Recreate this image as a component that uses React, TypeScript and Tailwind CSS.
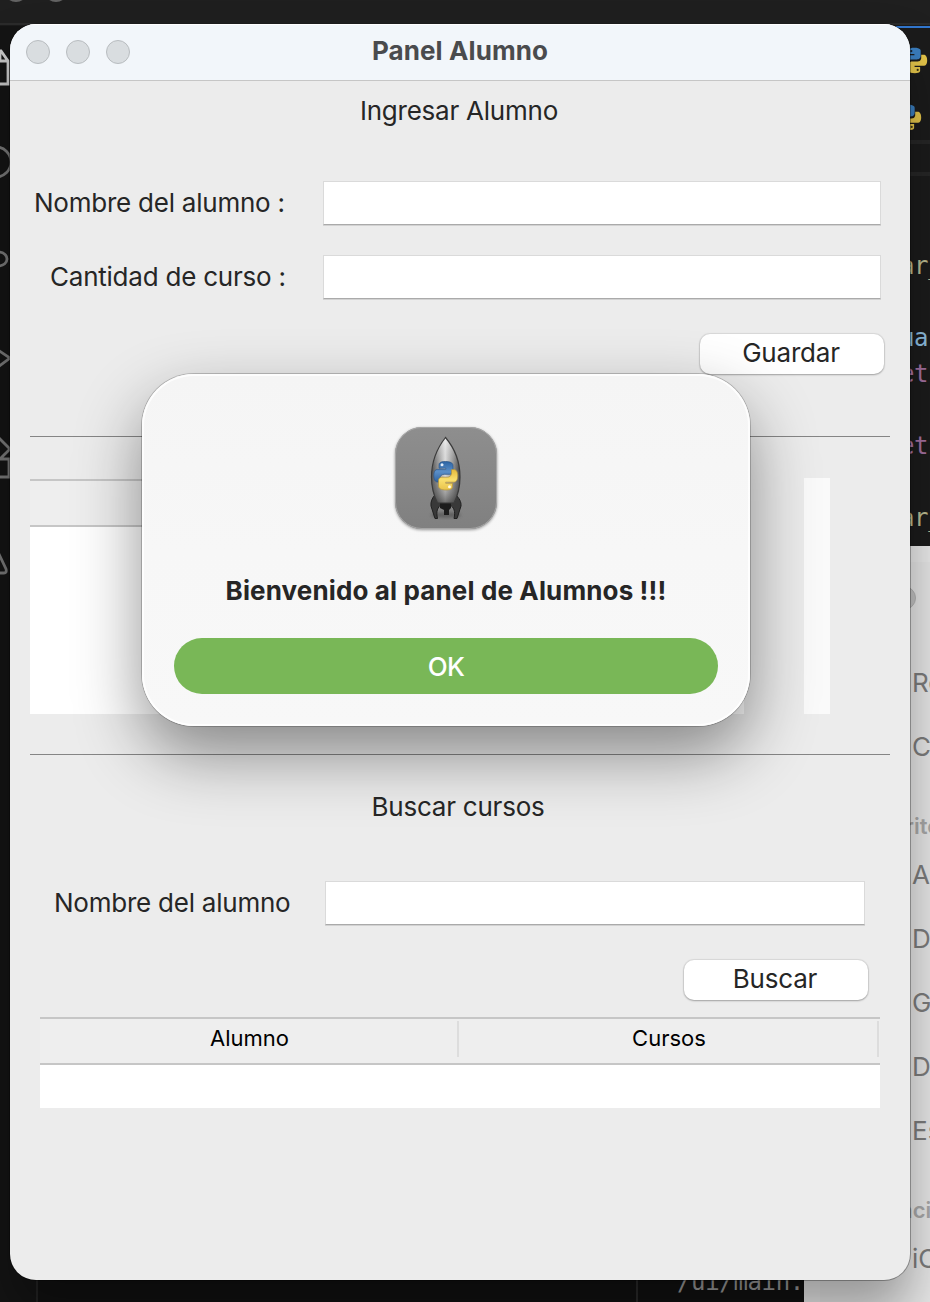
import type { ReactNode } from "react";

function PythonGlyph({ className }: { className?: string }) {
  return (
    <svg viewBox="0 0 32 32" className={className} fill="none">
      <path
        d="M15.5 2C9.5 2 9.8 4.7 9.8 4.7v4.1h6.1v1.3H6.4S2 9.600 2 16.100s3.800 6.300 3.800 6.300h2.800v-3.500s-.3-4.100 4-4.100h6.300s3.900 0 3.900-4V5.200S23.400 2 15.500 2z"
        fill="#3a7ebf"
      />
      <circle cx="12.500" cy="5.600" r="1.200" fill="#17202a" />
      <path
        d="M16.500 30c6 0 5.700-2.700 5.700-2.700v-4.100h-6.100v-1.300h9.500s4.400.5 4.400-6-3.800-6.300-3.800-6.300h-2.800v3.500s.3 4.100-4 4.100h-6.300s-3.900 0-3.900 4v5.600S8.600 30 16.500 30z"
        fill="#e5c64a"
      />
      <circle cx="19.500" cy="26.400" r="1.200" fill="#3a3417" />
    </svg>
  );
}

function RocketIcon() {
  return (
    <svg viewBox="0 0 102 102" className="h-[102px] w-[102px] overflow-visible">
      <defs>
        <linearGradient id="tile" x1="0" y1="0" x2="0" y2="1">
          <stop offset="0" stopColor="#8e8e8e" />
          <stop offset="1" stopColor="#808080" />
        </linearGradient>
        <linearGradient id="hull" x1="0" y1="0" x2="1" y2="0">
          <stop offset="0" stopColor="#4e4e4e" />
          <stop offset=".2" stopColor="#8a8a8a" />
          <stop offset=".48" stopColor="#e0e0e0" />
          <stop offset=".75" stopColor="#959595" />
          <stop offset="1" stopColor="#444" />
        </linearGradient>
        <linearGradient id="shade" x1="0" y1="0" x2="0" y2="1">
          <stop offset="0" stopColor="#fff" stopOpacity=".5" />
          <stop offset=".5" stopColor="#aaa" stopOpacity="0" />
          <stop offset="1" stopColor="#222" stopOpacity=".6" />
        </linearGradient>
        <linearGradient id="blue" x1="0" y1="0" x2="0" y2="1">
          <stop offset="0" stopColor="#2c64a4" />
          <stop offset=".5" stopColor="#5b8fc8" />
          <stop offset="1" stopColor="#2e62a0" />
        </linearGradient>
        <linearGradient id="gold" x1="0" y1="0" x2="0" y2="1">
          <stop offset="0" stopColor="#e4b93c" />
          <stop offset=".5" stopColor="#f9df6e" />
          <stop offset="1" stopColor="#e9c34a" />
        </linearGradient>
        <filter id="soft" x="-20%" y="-20%" width="140%" height="140%">
          <feGaussianBlur stdDeviation="1.500" />
        </filter>
      </defs>
      <rect x="0" y="1" width="102" height="102" rx="27" fill="#000" opacity=".4" filter="url(#soft)" />
      <rect width="102" height="102" rx="27" fill="url(#tile)" />
      <rect x=".5" y=".5" width="101" height="101" rx="26.500" fill="none" stroke="#a6a6a6" />
      <ellipse cx="51" cy="88" rx="15" ry="3" fill="#333" opacity=".4" filter="url(#soft)" />
      <path d="M40 68c-3 3-4.500 7-4 11l4 12.500h2.500c-1.500-7-.5-11 5-15zM61 68c3 3 5.500 7 5 11l-4 12.500h-3c1.500-7 .5-11-5.500-15z" fill="#393939" stroke="#202020" />
      <path d="M45 75h11v6l-2 2v5h-5v-5l-4-2z" fill="#1c1c1c" />
      <path d="M50.500 10.500C43 20 36.500 34 36.500 50c0 10 2 18 6 26h16.500c4-8 6-16 6-26 0-16-6.500-30-14.500-39.500z" fill="url(#hull)" />
      <path d="M50.500 10.500C43 20 36.500 34 36.500 50c0 10 2 18 6 26h16.500c4-8 6-16 6-26 0-16-6.500-30-14.500-39.500z" fill="url(#shade)" stroke="#3b3b3b" strokeWidth="1.200" />
      <g strokeWidth=".7">
        <path d="M50.500 34.500c-6 0-6.500 2-6.500 3.600v3.100h6.800v1.100h-8c-3 0-4 3-4 6.500s1.200 6.200 4 6.200H45v-3.500c0-3 2-4.200 4.200-4.200h5.600c2 0 3.200-1.500 3.200-3.300v-5.500c0-2.500-2.800-4-7.500-4z" fill="url(#blue)" stroke="#2d5585" />
        <path d="M51 63c6 0 6.500-2 6.500-3.600v-3.100h-6.800v-1.100h8c3 0 4-3 4-6.500s-1.200-6.200-4-6.200h-2.200V46c0 3-2 4.200-4.200 4.200h-5.600c-2 0-3.200 1.500-3.200 3.300V59c0 2.500 2.800 4 7.500 4z" fill="url(#gold)" stroke="#b2923c" />
        <circle cx="47" cy="37.800" r="1.500" fill="#e5eefa" />
        <circle cx="54.500" cy="59.800" r="1.500" fill="#fffbe8" />
      </g>
    </svg>
  );
}

function Label({ children, className = "" }: { children: ReactNode; className?: string }) {
  return <span className={`whitespace-nowrap text-[26px] leading-8 tracking-[-0.23px] text-[#262626] ${className}`}>{children}</span>;
}

function Field({ className }: { className: string }) {
  return <input className={`h-11 rounded-none border border-[#dadada] border-b-[#aaaaaa] bg-white shadow-[0_1px_0_#d2d2d2] outline-none ${className}`} />;
}

function PushButton({ children }: { children: ReactNode }) {
  return (
    <button className="flex h-10 w-[184px] items-center justify-center rounded-[10px] bg-white pb-0.5 pr-0.5 text-[26px] leading-8 tracking-[-0.2px] text-[#262626] shadow-[0_0_1px_1px_rgba(0,0,0,0.08),0_1px_2px_rgba(0,0,0,0.26)]">
      {children}
    </button>
  );
}

function EditorBackdrop() {
  return (
    <div className="absolute inset-0 bg-[#1b1b1b] font-['DejaVu_Sans_Mono',monospace] text-[24px] leading-8 tracking-[-0.35px]">
      <div className="h-[25px] border-b-2 border-[#2b2b2b] bg-[#1f1f1f]" />
      <div className="absolute left-[4px] top-[-22px] size-6 rounded-full bg-[#636363]" />
      <div className="absolute left-[44px] top-[-22px] size-6 rounded-full bg-[#636363]" />
      <div className="absolute left-0 top-[26px] h-[1276px] w-10 bg-[#141414]" />
      <svg className="absolute left-0 top-0 h-[620px] w-3" fill="none" stroke="#777" strokeWidth="2.800">
        <path d="M-4 51h5l7 10v23H-8M0 51v10h8" stroke="#c8c8c8" />
        <circle cx="-4" cy="162" r="15" />
        <path d="M-2 252c12 0 12 14 0 14M-2 350l12 8-12 9M-3 436l13 13-10 10M-3 459H9v18H-3M-3 550l9 19q1 4-2 4H-3" />
      </svg>
      <div className="absolute left-[896px] top-[26px] h-0.5 w-[34px] bg-[#3277cf]" />
      <PythonGlyph className="absolute left-[900px] top-[46px] size-[29px]" />
      <PythonGlyph className="absolute left-[894px] top-[103px] size-[29px]" />
      <div className="absolute left-[905px] top-[140px] h-1 w-[25px] bg-[#262626]" />
      <div className="absolute left-[905px] top-[172px] h-1 w-[25px] bg-[#262626]" />
      <div className="absolute left-[900px] top-[250px] text-[#bcbc91]">ar_</div>
      <div className="absolute left-[900px] top-[322px] text-[#8ebfe0]">ua</div>
      <div className="absolute left-[900px] top-[358px] text-[#a471a0]">et</div>
      <div className="absolute left-[900px] top-[430px] text-[#a471a0]">et</div>
      <div className="absolute left-[900px] top-[502px] text-[#bcbc91]">ar_</div>
      <div className="absolute left-9 top-[1270px] h-8 w-[768px] border-l-2 border-[#232323] bg-[#111111]" />
      <div className="absolute left-[636px] top-[1270px] h-8 w-0.5 bg-[#2a2a2a]" />
      <div className="absolute left-[677px] top-[1266px] text-[#9a9a9a]">/ui/main.</div>
    </div>
  );
}

function FinderBackdrop() {
  const items = [
    ["Re", "top-[121px]"],
    ["Co", "top-[185px]"],
    ["Ap", "top-[313px]"],
    ["Do", "top-[377px]"],
    ["Go", "top-[441px]"],
    ["De", "top-[505px]"],
    ["Es", "top-[569px]"],
    ["iCl", "top-[697px]"],
  ];
  return (
    <div className="absolute left-[804px] top-[546px] h-[756px] w-[126px] overflow-hidden bg-[#eaeaea] text-[26px] leading-8 text-[#7c7c7c]">
      <div className="absolute left-4 top-4 h-[740px] w-[110px] rounded-tl-[20px] bg-[#e6e6e6]" />
      <div className="absolute left-[88px] top-10 size-6 rounded-full border border-[#b4b4b4] bg-[#c2c2c2]" />
      {items.map(([text, top]) => (
        <div key={text} className={`absolute left-[108px] ${top}`}>{text}</div>
      ))}
      <div className="absolute left-[101px] top-[264px] text-[22px] font-semibold text-[#a8a8a8]">rito</div>
      <div className="absolute left-[96px] top-[648px] text-[22px] font-semibold text-[#a8a8a8]">aci</div>
    </div>
  );
}

function TitleBar() {
  return (
    <header className="relative flex h-[57px] items-center justify-center border-b border-[#c6c6c6] bg-[#f2f6fa] pb-0.5 shadow-[inset_0_1px_0_#ffffff]">
      <div className="absolute left-4 top-4 flex gap-4">
        <i className="size-6 rounded-full border border-[#b8bcbf] bg-[#d9dde0]" />
        <i className="size-6 rounded-full border border-[#b8bcbf] bg-[#d9dde0]" />
        <i className="size-6 rounded-full border border-[#b8bcbf] bg-[#d9dde0]" />
      </div>
      <h1 className="text-[26px] font-bold leading-8 tracking-[0.1px] text-[#4a4b4d]">Panel Alumno</h1>
    </header>
  );
}

function WelcomeDialog() {
  return (
    <section className="absolute left-[142px] top-[374px] flex h-[352px] w-[608px] flex-col items-center rounded-[52px] bg-linear-to-b from-[#f5f5f5] via-[#f7f7f7] to-[#f8f8f8] pt-[53px] shadow-[inset_0_0_0_2px_#ffffffcc,0_0_0_1px_rgba(0,0,0,0.2),0_28px_66px_rgba(0,0,0,0.43)]">
      <RocketIcon />
      <p className="mt-[46px] whitespace-nowrap text-[26px] font-bold leading-8 tracking-[0.13px] text-[#262626]">Bienvenido al panel de Alumnos !!!</p>
      <button className="mt-[31px] h-14 w-[544px] rounded-full bg-[#79b757] pt-0.5 text-[26px] font-medium leading-8 tracking-[-0.6px] text-white">OK</button>
    </section>
  );
}

export default function App() {
  return (
    <main className="relative h-[1302px] w-[930px] overflow-hidden font-['Inter',sans-serif]">
      <EditorBackdrop />
      <FinderBackdrop />
      <div className="absolute left-[10px] top-6 flex h-[1256px] w-[900px] flex-col overflow-hidden rounded-[26px] bg-[#ececec] shadow-[0_0_0_1px_rgba(0,0,0,0.3),0_32px_50px_rgba(0,0,0,0.34)]">
        <TitleBar />
        <div className="flex justify-center pr-[2px] pt-[14px]"><Label>Ingresar Alumno</Label></div>
        <div className="mt-[54px] flex items-center pl-6">
          <Label className="w-[289px]">Nombre del alumno :</Label>
          <Field className="w-[558px]" />
        </div>
        <div className="mt-[30px] flex items-center pl-10">
          <Label className="w-[273px]">Cantidad de curso :</Label>
          <Field className="w-[558px]" />
        </div>
        <div className="mt-[35px] flex justify-end pr-[26px]"><PushButton>Guardar</PushButton></div>
        <hr className="mx-5 mt-[62px] border-t border-[#858585]" />
        <div className="mt-[41px] flex h-[236px] px-5">
          <div className="mt-px w-[714px]">
            <div className="h-12 border-y-2 border-[#c6c6c6] bg-[#eeeeee]" />
            <div className="h-[187px] bg-white" />
          </div>
          <div className="ml-[60px] w-[26px] bg-[#fafafa]" />
        </div>
        <hr className="mx-5 mt-10 border-t border-[#858585]" />
        <div className="mt-9 flex justify-center pr-1"><Label>Buscar cursos</Label></div>
        <div className="mt-[58px] flex items-center pl-11">
          <Label className="w-[271px]">Nombre del alumno</Label>
          <Field className="w-[540px]" />
        </div>
        <div className="mt-[35px] flex justify-end pr-[42px]"><PushButton>Buscar</PushButton></div>
        <div className="mx-[30px] mt-[17px]">
          <div className="flex h-12 border-y-2 border-[#c6c6c6] bg-[#eeeeee] pr-px pt-0.5 text-center text-[22px] leading-8 text-black">
            <div className="h-9 w-[419px] border-r-2 border-[#dddddd] pl-0.5 pt-px">Alumno</div>
            <div className="h-9 w-[420px] border-r-2 border-[#dddddd] pl-0.5 pt-px">Cursos</div>
          </div>
          <div className="h-[43px] bg-white" />
        </div>
      </div>
      <WelcomeDialog />
    </main>
  );
}
